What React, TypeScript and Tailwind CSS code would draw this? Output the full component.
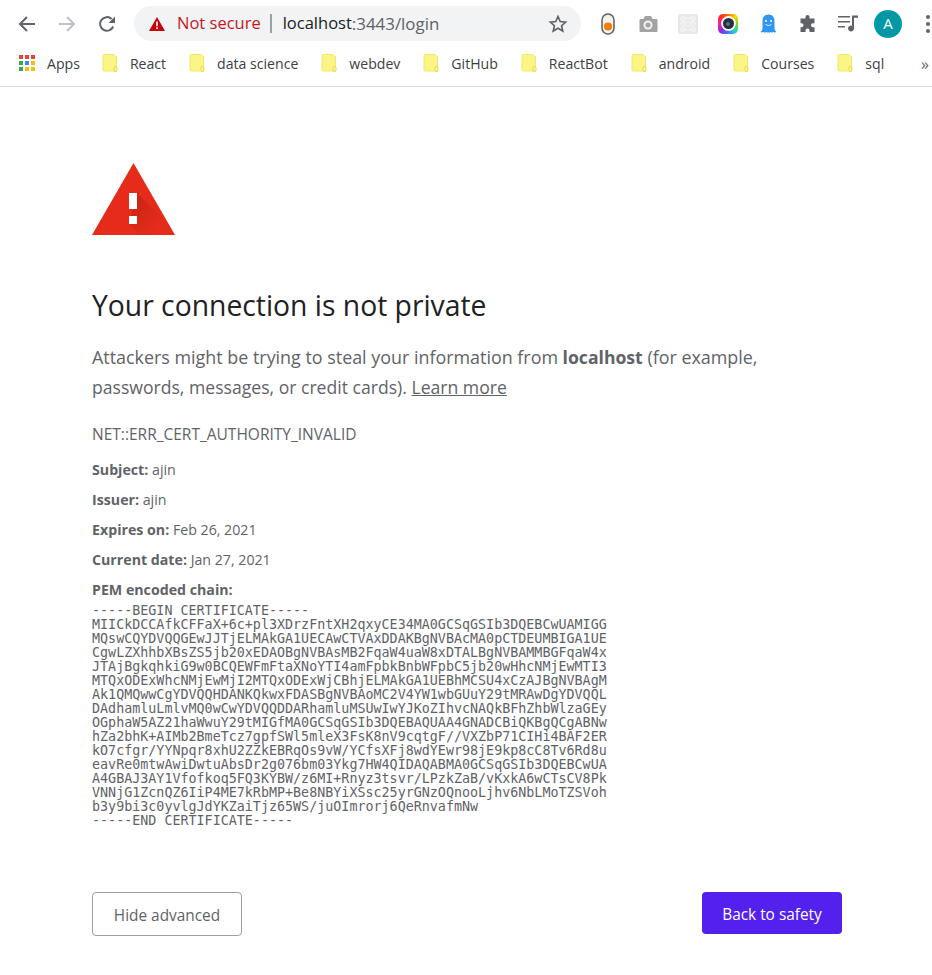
const bookmarks = ['React', 'data science', 'webdev', 'GitHub', 'ReactBot', 'android', 'Courses', 'sql']

const pem = `-----BEGIN CERTIFICATE-----
MIICkDCCAfkCFFaX+6c+pl3XDrzFntXH2qxyCE34MA0GCSqGSIb3DQEBCwUAMIGG
MQswCQYDVQQGEwJJTjELMAkGA1UECAwCTVAxDDAKBgNVBAcMA0pCTDEUMBIGA1UE
CgwLZXhhbXBsZS5jb20xEDAOBgNVBAsMB2FqaW4uaW8xDTALBgNVBAMMBGFqaW4x
JTAjBgkqhkiG9w0BCQEWFmFtaXNoYTI4amFpbkBnbWFpbC5jb20wHhcNMjEwMTI3
MTQxODExWhcNMjEwMjI2MTQxODExWjCBhjELMAkGA1UEBhMCSU4xCzAJBgNVBAgM
Ak1QMQwwCgYDVQQHDANKQkwxFDASBgNVBAoMC2V4YW1wbGUuY29tMRAwDgYDVQQL
DAdhamluLmlvMQ0wCwYDVQQDDARhamluMSUwIwYJKoZIhvcNAQkBFhZhbWlzaGEy
OGphaW5AZ21haWwuY29tMIGfMA0GCSqGSIb3DQEBAQUAA4GNADCBiQKBgQCgABNw
hZa2bhK+AIMb2BmeTcz7gpfSWl5mleX3FsK8nV9cqtgF//VXZbP71CIHi4BAF2ER
kO7cfgr/YYNpqr8xhU2ZZkEBRqOs9vW/YCfsXFj8wdYEwr98jE9kp8cC8Tv6Rd8u
eavRe0mtwAwiDwtuAbsDr2g076bm03Ykg7HW4QIDAQABMA0GCSqGSIb3DQEBCwUA
A4GBAJ3AY1Vfofkoq5FQ3KYBW/z6MI+Rnyz3tsvr/LPzkZaB/vKxkA6wCTsCV8Pk
VNNjG1ZcnQZ6IiP4ME7kRbMP+Be8NBYiXSsc25yrGNzOQnooLjhv6NbLMoTZSVoh
b3y9bi3c0yvlgJdYKZaiTjz65WS/juOImrorj6QeRnvafmNw
-----END CERTIFICATE-----`

const details = [
  ['Subject:', 'ajin'],
  ['Issuer:', 'ajin'],
  ['Expires on:', 'Feb 26, 2021'],
  ['Current date:', 'Jan 27, 2021'],
]

function ToolIcon({ children }: { children: React.ReactNode }) {
  return <div className="w-10 h-7 flex items-center justify-center shrink-0">{children}</div>
}

function BookmarkIcon() {
  return (
    <svg width="16" height="18" viewBox="0 0 16 18" className="shrink-0">
      <path d="M2 0.500h10l2.500 2.500v13a1 1 0 0 1-1 1H2a1 1 0 0 1-1-1V1.500a1 1 0 0 1 1-1z" fill="#fbf585" stroke="#f0e86a" />
      <rect x="12" y="12.500" width="3" height="5" rx="1" fill="#fbf585" stroke="#e6dc5c" />
    </svg>
  )
}

function AppsIcon() {
  const colors = ['#ea4335', '#ea4335', '#ea4335', '#34a853', '#4285f4', '#fbbc05', '#34a853', '#fbbc05', '#fbbc05']
  return (
    <div className="grid grid-cols-3 gap-[2px] w-[16px] ml-[1px] shrink-0">
      {colors.map((c, i) => (
        <div key={i} className="w-[4px] h-[4px]" style={{ backgroundColor: c }} />
      ))}
    </div>
  )
}

export default function App() {
  return (
    <div className="w-[932px] h-[975px] overflow-hidden bg-white font-['Open_Sans',sans-serif]">
      {/* Toolbar */}
      <div className="h-[46px] flex items-center pt-[1px]">
        <div className="w-[134px] flex items-center pl-[18px] gap-[22px] shrink-0">
          <svg width="18" height="18" viewBox="0 0 18 18" fill="none" stroke="#5f6368" strokeWidth="2">
            <path d="M17 9H2M9 2L2 9l7 7" />
          </svg>
          <svg width="18" height="18" viewBox="0 0 18 18" fill="none" stroke="#bdc1c6" strokeWidth="2">
            <path d="M1 9h15M9 2l7 7-7 7" />
          </svg>
          <svg width="18" height="18" viewBox="0 0 18 18" fill="none">
            <path d="M15.200 11.500A6.800 6.800 0 1 1 13.600 4" stroke="#5f6368" strokeWidth="2" />
            <path d="M17 1.500v6.500h-6.500z" fill="#5f6368" />
          </svg>
        </div>
        <div className="w-[447px] h-[35px] rounded-full bg-[#f1f3f4] flex items-center pl-[15px] pr-[13px] shrink-0">
          <svg width="16" height="14" viewBox="0 0 16 14" className="shrink-0">
            <path d="M8 0l8 14H0z" fill="#c5000f" />
            <path d="M7.200 4.500h1.600v4.700H7.200zM7.200 10.300h1.600v1.700H7.200z" fill="#fff" />
          </svg>
          <span className="ml-[12px] text-[16.500px] text-[#c5161d]">Not secure</span>
          <div className="w-[2px] h-[19px] bg-[#9aa0a6] ml-[9px]" />
          <span className="ml-[11px] text-[16.500px] text-[#202124]">localhost</span>
          <span className="text-[16.900px] text-[#5f6368]">:3443/login</span>
          <svg width="20" height="20" viewBox="0 0 24 24" fill="none" stroke="#5f6368" strokeWidth="2" className="ml-auto">
            <path d="M12 3l2.700 6 6.500.7-4.900 4.400 1.400 6.400L12 17.200l-5.700 3.300 1.400-6.400L2.800 9.700l6.500-.7z" />
          </svg>
        </div>
        <div className="flex items-center ml-[7px]">
          <ToolIcon>
            <svg width="16" height="22" viewBox="0 0 16 22">
              <rect x="2" y="1" width="12" height="20" rx="6" fill="#f1f1f1" stroke="#5f5f5f" strokeWidth="1.500" />
              <circle cx="8" cy="13.500" r="4" fill="#f57c00" />
            </svg>
          </ToolIcon>
          <ToolIcon>
            <svg width="20" height="18" viewBox="0 0 20 18">
              <path d="M1.500 4h4l1.500-3h6l1.500 3h4a1 1 0 0 1 1 1v11a1 1 0 0 1-1 1h-16a1 1 0 0 1-1-1V5a1 1 0 0 1 1-1z" fill="#a3a3a3" />
              <circle cx="10" cy="10" r="4.500" fill="#f1f1f1" />
              <circle cx="10" cy="10" r="2.500" fill="#a3a3a3" />
            </svg>
          </ToolIcon>
          <ToolIcon>
            <svg width="20" height="20" viewBox="0 0 20 20">
              <rect width="20" height="20" rx="1" fill="#e8e8e8" />
              <path d="M3 3h4v3H3zM13 3h4v3h-4zM3 14h4v3H3zM13 14h4v3h-4zM2 10l3-2 3 2-3 2zM12 10l3-2 3 2-3 2z" fill="none" stroke="#fafafa" />
              <circle cx="10" cy="10" r="2.500" fill="none" stroke="#fafafa" />
              <path d="M8 4h4M8 16h4M5 7v1M15 7v1" stroke="#fafafa" />
            </svg>
          </ToolIcon>
          <ToolIcon>
            <div className="w-5 h-5 rounded-[5px] bg-[conic-gradient(#ff6a00,#ffd600,#7ed321,#27d3c7,#3f7bf5,#8a2be2,#ff1fa0,#ff2d2d,#ff6a00)] flex items-center justify-center">
              <div className="w-[15px] h-[15px] rounded-full bg-[#f5f5f5] flex items-center justify-center">
                <div className="w-[11px] h-[11px] rounded-full bg-[#27303f] flex items-center justify-center">
                  <div className="w-[4px] h-[4px] rounded-full bg-[#54708e]" />
                </div>
              </div>
            </div>
          </ToolIcon>
          <ToolIcon>
            <svg width="17" height="20" viewBox="0 0 17 20">
              <path d="M8.500 0.500c3.800 0 6 2.800 6 6.200v6.800c0 2 .8 3.500 2 4.500-1 .6-2.200.6-3.200 0-.8.800-1.800.800-2.600 0-.8.800-3.600.800-4.400 0-.8.800-1.800.800-2.600 0-1 .6-2.200.6-3.200 0 1.200-1 2-2.500 2-4.500V6.700c0-3.400 2.200-6.200 6-6.200z" fill="#2f96f8" />
              <circle cx="6" cy="7" r="1" fill="#fff" />
              <circle cx="11" cy="7" r="1" fill="#fff" />
              <path d="M5.500 10c1.500 2 4.500 2 6 0" stroke="#fff" fill="none" />
            </svg>
          </ToolIcon>
          <ToolIcon>
            <svg width="18" height="18" viewBox="0 0 18 18">
              <path d="M6.500 2a2 2 0 0 1 4 0v1.500h5v4.800h-1.500a2 2 0 0 0 0 4h1.500V17h-5v-1.500a2 2 0 0 0-4 0V17H1.500v-4.700h1a2 2 0 0 0 0-4h-1V3.500h5z" fill="#5f6368" />
            </svg>
          </ToolIcon>
          <ToolIcon>
            <svg width="20" height="17" viewBox="0 0 20 17" fill="#5f6368">
              <path d="M0 1h12v1.600H0zM0 6h12v1.600H0zM0 11h7v1.600H0z" />
              <path d="M14 0.500h6v2.200h-4V13.500a3 3 0 1 1-2-2.800z" />
            </svg>
          </ToolIcon>
          <ToolIcon>
            <div className="w-7 h-7 rounded-full bg-[#0097a7] flex items-center justify-center text-white text-[15px]">A</div>
          </ToolIcon>
          <ToolIcon>
            <div className="flex flex-col gap-[3px]">
              <div className="w-[4px] h-[4px] rounded-full bg-[#5f6368]" />
              <div className="w-[4px] h-[4px] rounded-full bg-[#5f6368]" />
              <div className="w-[4px] h-[4px] rounded-full bg-[#5f6368]" />
            </div>
          </ToolIcon>
        </div>
      </div>

      {/* Bookmarks */}
      <div className="h-[41px] border-b border-[#dadce0] flex items-center pl-[18px] pb-[5px] text-[14.100px] text-[#3c4043] relative">
        <div className="flex items-center gap-[12px] mr-[22px]">
          <AppsIcon />
          <span>Apps</span>
        </div>
        <div className="flex items-center gap-[23px]">
          {bookmarks.map((b) => (
            <div key={b} className="flex items-center gap-[12px]">
              <BookmarkIcon />
              <span>{b}</span>
            </div>
          ))}
        </div>
        <span className="absolute left-[921px] top-[6px] text-[#5f6368] text-[16px]">»</span>
      </div>

      {/* Interstitial */}
      <main className="pl-[92px] pr-[90px] pt-[76px] text-[#5f6368]">
        <svg width="83" height="72" viewBox="0 0 83 72" className="block">
          <defs>
            <linearGradient id="fold" gradientUnits="userSpaceOnUse" x1="40" y1="40" x2="64" y2="64">
              <stop offset="0" stopColor="#a81c10" stopOpacity="0.450" />
              <stop offset="1" stopColor="#a81c10" stopOpacity="0" />
            </linearGradient>
          </defs>
          <path d="M41.500 0L83 72H0z" fill="#e52b1a" />
          <path d="M45 30L78 63L83 72H48L37 61z" fill="url(#fold)" />
          <rect x="37" y="30" width="8" height="16" fill="#fff" />
          <rect x="37" y="53" width="8" height="8" fill="#fff" />
        </svg>

        <h1 className="mt-[50px] text-[28.300px] leading-[40px] font-normal text-[#202124]">Your connection is not private</h1>

        <p className="mt-[17px] text-[17.600px] leading-[30px]">
          <span className="text-[17.900px]">Attackers might be trying to steal your information from </span>
          <strong className="font-bold">localhost</strong>
          <span className="text-[17.900px]"> (for example,</span> passwords, messages, or credit cards). <span className="underline">Learn more</span>
        </p>

        <div className="mt-[22px] text-[15.500px] leading-[20px]">NET::ERR_CERT_AUTHORITY_INVALID</div>

        <div className="mt-[16px] flex flex-col gap-[10px] text-[14.200px] leading-[20px]">
          {details.map(([k, v]) => (
            <div key={k}>
              <strong className="font-bold">{k}</strong> {v}
            </div>
          ))}
          <div className="font-bold">PEM encoded chain:</div>
        </div>

        <pre className="mt-[4px] font-['DejaVu_Sans_Mono',monospace] text-[13.370px] leading-[14px] text-[#5f6368]">{pem}</pre>

        <div className="mt-[64px] flex justify-between items-start">
          <button className="w-[150px] h-[44px] pt-[3px] rounded-[4px] border border-[#9aa0a6] text-[15.400px] text-[#5f6368]">Hide advanced</button>
          <button className="w-[140px] h-[42px] pt-[3px] rounded-[4px] bg-[#5420ee] text-[15.400px] text-white">Back to safety</button>
        </div>
      </main>
    </div>
  )
}
